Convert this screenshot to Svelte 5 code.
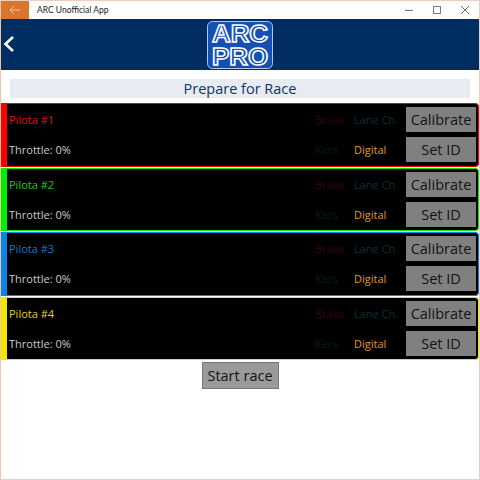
<script>
  const pilots = [
    { name: "Pilota #1", color: "#ff0000", label: "#e0101a" },
    { name: "Pilota #2", color: "#00ee00", label: "#10d010" },
    { name: "Pilota #3", color: "#0a84e6", label: "#1278d0" },
    { name: "Pilota #4", color: "#f2e600", label: "#e0d410" },
  ];
</script>

<div class="window">
  <div class="titlebar">
    <div class="back-tile">
      <svg width="12" height="10" viewBox="0 0 12 10">
        <path d="M5 1 1 5l4 4M1 5h10" fill="none" stroke="#f5c9a8" stroke-width="1" />
      </svg>
    </div>
    <span class="app-name">ARC Unofficial App</span>
    <div class="controls">
      <svg viewBox="0 0 10 10"><path d="M0 5.5h10" stroke="#444" /></svg>
      <svg viewBox="0 0 10 10"><path d="M.5.5h9v9h-9z" fill="none" stroke="#444" /></svg>
      <svg viewBox="0 0 10 10"><path d="M0 0l10 10M10 0 0 10" stroke="#444" /></svg>
    </div>
  </div>

  <header class="header">
    <svg class="chevron" width="12" height="18" viewBox="0 0 12 18">
      <path d="M10 2 2.5 9l7.5 7" fill="none" stroke="#fff" stroke-width="2.6" />
    </svg>
    <svg class="logo" width="66" height="48" viewBox="0 0 66 48">
      <rect x=".5" y=".5" width="65" height="47" rx="5" fill="#1450b4" stroke="#b4c8ee" />
      <text x="33" y="21" class="logo-text" textLength="56" lengthAdjust="spacingAndGlyphs">ARC</text>
      <text x="33" y="44" class="logo-text" textLength="56" lengthAdjust="spacingAndGlyphs">PRO</text>
    </svg>
  </header>

  <h1 class="title">Prepare for Race</h1>

  <div class="list">
    {#each pilots as pilot}
      <div class="card" style="--c: {pilot.color}; --l: {pilot.label}">
        <div class="info">
          <span class="name">{pilot.name}</span>
          <span class="throttle">Throttle: 0%</span>
        </div>
        <div class="flags">
          <span class="brake">Brake</span>
          <span class="lane">Lane Ch.</span>
          <span class="kers">Kers</span>
          <span class="digital">Digital</span>
        </div>
        <div class="actions">
          <button>Calibrate</button>
          <button>Set ID</button>
        </div>
      </div>
    {/each}
  </div>

  <button class="start">Start race</button>
</div>

<style>
  :global(body) {
    margin: 0;
    background: #fff;
  }
  .window {
    box-sizing: border-box;
    width: 480px;
    height: 480px;
    border: 1px solid #eccfc0;
    border-left-color: #f0c4a8;
    font-family: "Open Sans", "Noto Sans", sans-serif;
    display: flex;
    flex-direction: column;
    overflow: hidden;
  }
  .titlebar {
    height: 18px;
    display: flex;
    align-items: center;
    flex: none;
  }
  .back-tile {
    width: 28px;
    height: 18px;
    background: #d9752c;
    display: flex;
    align-items: center;
    justify-content: center;
  }
  .app-name {
    margin-left: 8px;
    font-family: "Lato", sans-serif;
    font-size: 8.5px;
    color: #222;
  }
  .controls {
    margin-left: auto;
    display: flex;
    gap: 20px;
    padding-right: 10px;
  }
  .controls svg {
    width: 8px;
    height: 8px;
  }
  .header {
    height: 51px;
    flex: none;
    background: #002d62;
    display: flex;
    align-items: center;
    justify-content: center;
    position: relative;
  }
  .chevron {
    position: absolute;
    left: 2px;
    top: 16px;
  }
  .logo-text {
    font-family: "Liberation Sans", sans-serif;
    font-weight: 700;
    font-size: 24px;
    text-anchor: middle;
    fill: #1450b4;
    stroke: #fff;
    stroke-width: 1.5px;
  }
  .title {
    margin: 9px 9px 0;
    height: 19px;
    line-height: 19px;
    background: #e8ebf1;
    text-align: center;
    font-size: 14.5px;
    font-weight: 400;
    color: #0c3566;
    flex: none;
  }
  .list {
    margin: 5px 0 0 -1px;
    display: flex;
    flex-direction: column;
    gap: 1px;
    flex: none;
  }
  .card {
    box-sizing: border-box;
    height: 63.5px;
    display: flex;
    background: #000;
    border: 1px solid var(--c);
    border-left: 7px solid var(--c);
    border-radius: 0 4px 4px 0;
    padding: 3px 2px;
  }
  .info,
  .flags {
    display: grid;
    grid-auto-rows: 25px;
    row-gap: 5px;
    align-items: center;
    font-size: 11px;
    white-space: nowrap;
  }
  .info {
    flex: 1;
  }
  .name {
    color: var(--l);
  }
  .throttle {
    color: #c6ccd2;
  }
  .flags {
    width: 91px;
    grid-template-columns: 39px 43px;
  }
  .flags span {
    overflow: hidden;
  }
  .brake {
    color: #330406;
  }
  .lane {
    color: #0a3036;
  }
  .kers {
    color: #06200c;
  }
  .digital {
    color: #e09a28;
  }
  .actions {
    width: 70px;
    display: flex;
    flex-direction: column;
    gap: 5px;
  }
  button {
    padding: 0;
    font-family: inherit;
    color: #141414;
    background: #808080;
    border: none;
  }
  .actions button {
    height: 25px;
    font-size: 14.5px;
  }
  .start {
    align-self: center;
    margin-top: 2px;
    width: 77px;
    height: 27px;
    font-size: 14.5px;
    background: #9a9a9a;
    border: 1px solid #777;
  }
</style>
